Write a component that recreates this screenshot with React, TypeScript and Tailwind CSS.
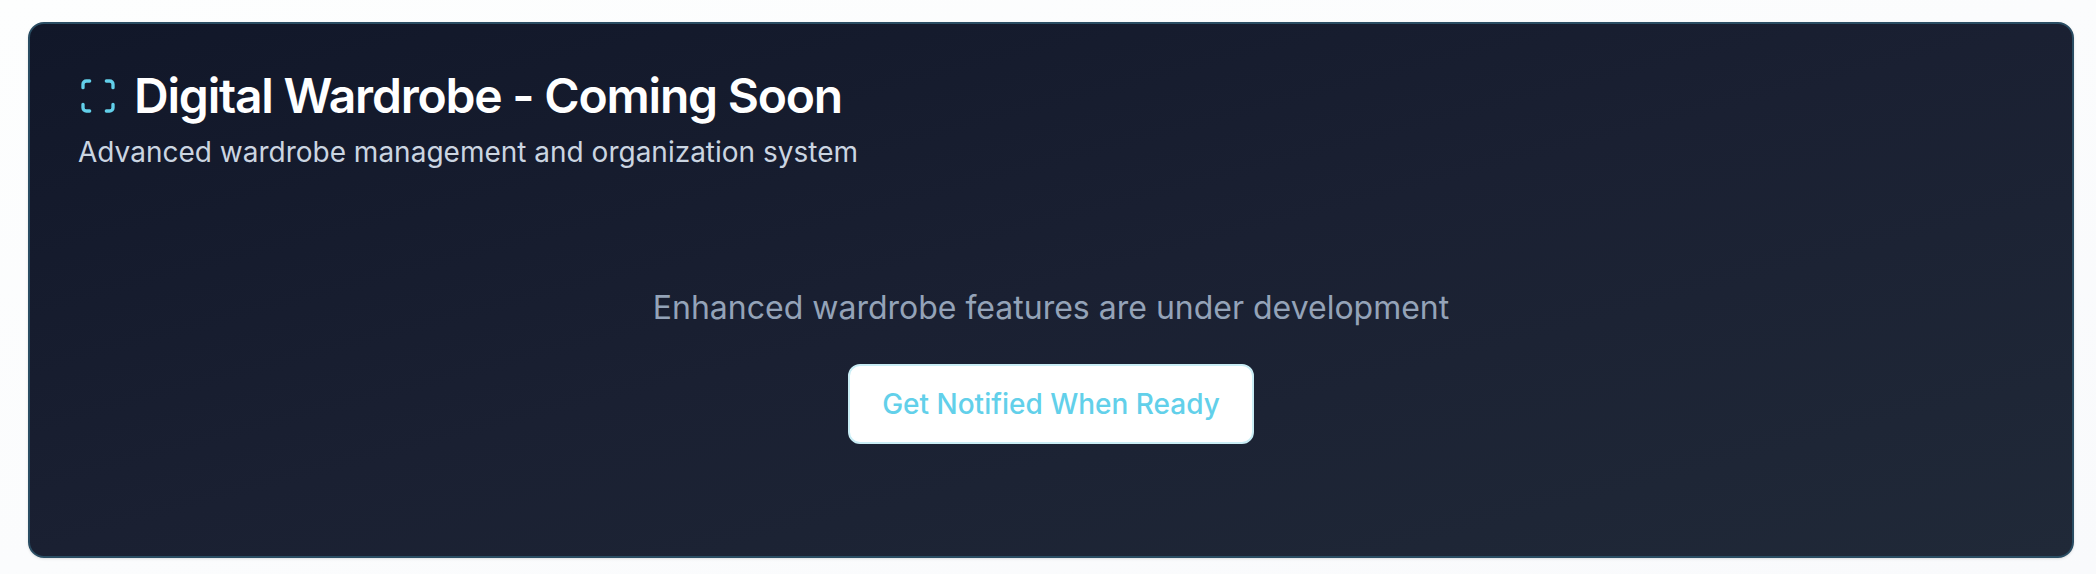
import { Scan } from "lucide-react";

export default function App() {
  return (
    <main className="min-h-screen bg-linear-to-br from-[#fdfefe] to-[#f9fafc] px-7 pt-[22px] pr-[22px] pb-4 font-[Inter,sans-serif]">
      <section className="rounded-2xl border-2 border-[#2a4d63] bg-linear-to-br from-[#111729] via-[#1a2032] to-[#202938] p-12 shadow-sm">
        <header className="flex flex-col gap-3">
          <h1 className="flex items-center gap-4 text-5xl leading-none font-semibold tracking-tight text-white">
            <Scan className="size-10 text-[#62d0ea]" aria-hidden="true" />
            Digital Wardrobe - Coming Soon
          </h1>
          <p className="text-[28px] leading-10 text-[#cbd5e1]">
            Advanced wardrobe management and organization system
          </p>
        </header>
        <div className="flex flex-col items-center gap-8 pt-28 pb-16">
          <p className="text-center text-[32px] leading-[48px] text-[#94a3b8]">
            Enhanced wardrobe features are under development
          </p>
          <button
            type="button"
            className="h-20 rounded-xl border-2 border-[#c9edf5] bg-white px-8 text-[28px] leading-10 font-medium text-[#62d0ea]"
          >
            Get Notified When Ready
          </button>
        </div>
      </section>
    </main>
  );
}
